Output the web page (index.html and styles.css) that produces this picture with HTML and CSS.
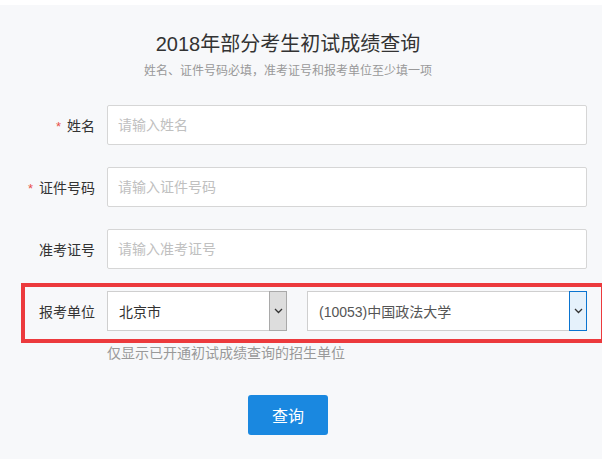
FILE: index.html
```html
<!DOCTYPE html>
<html lang="zh-CN">
<head>
<meta charset="utf-8">
<title>2018年部分考生初试成绩查询</title>
<link rel="stylesheet" href="styles.css">
</head>
<body>
<div class="page">
  <div class="head">
    <h1 class="title">2018年部分考生初试成绩查询</h1>
    <p class="subtitle">姓名、证件号码必填，准考证号和报考单位至少填一项</p>
  </div>
  <form class="form">
    <div class="rows">
      <div class="row">
        <label class="label"><span class="req">*</span>姓名</label>
        <input class="input" type="text" placeholder="请输入姓名">
      </div>
      <div class="row">
        <label class="label"><span class="req">*</span>证件号码</label>
        <input class="input" type="text" placeholder="请输入证件号码">
      </div>
      <div class="row">
        <label class="label">准考证号</label>
        <input class="input" type="text" placeholder="请输入准考证号">
      </div>
    </div>
    <div class="highlight">
      <label class="label">报考单位</label>
      <div class="select select-city">
        <span class="select-text">北京市</span>
        <span class="arrow"><svg width="9" height="6" viewBox="0 0 9 6"><path d="M1 1 L4.5 4.5 L8 1" fill="none" stroke="#333" stroke-width="1.3"/></svg></span>
      </div>
      <div class="select select-unit">
        <span class="select-text unit-text">(10053)中国政法大学</span>
        <span class="arrow arrow-focus"><svg width="9" height="6" viewBox="0 0 9 6"><path d="M1 1 L4.5 4.5 L8 1" fill="none" stroke="#333" stroke-width="1.3"/></svg></span>
      </div>
    </div>
    <p class="hint">仅显示已开通初试成绩查询的招生单位</p>
    <div class="actions">
      <button class="btn" type="button">查询</button>
    </div>
  </form>
</div>
</body>
</html>
```
FILE: styles.css
```css
html, body {
  margin: 0;
  padding: 0;
  background: #ffffff;
  overflow: hidden;
}
body {
  font-family: "Liberation Sans", "Noto Sans CJK SC", sans-serif;
  color: #333;
}
.page {
  margin-top: 5px;
  background: #f7f8fa;
  height: 454px;
  padding-top: 25px;
  box-sizing: border-box;
}
.head {
  width: 576px;
  text-align: center;
}
.title {
  margin: 0;
  font-size: 20px;
  font-weight: normal;
  line-height: 28px;
  color: #333;
}
.subtitle {
  margin: 4px 0 0;
  font-size: 12px;
  line-height: 18px;
  color: #999;
}
.form {
  margin-top: 25px;
}
.rows {
  display: flex;
  flex-direction: column;
  gap: 22px;
}
.row {
  display: flex;
  align-items: center;
  height: 40px;
}
.row .label {
  width: 95px;
}
.label {
  box-sizing: border-box;
  text-align: right;
  font-size: 14px;
  color: #333;
  flex: none;
}
.req {
  color: #e8504a;
  margin-right: 6px;
  font-size: 13px;
}
.input {
  margin-left: 12px;
  width: 480px;
  height: 40px;
  box-sizing: border-box;
  border: 1px solid #d6d6d6;
  border-radius: 2px;
  background: #fff;
  padding: 0 10px;
  font-size: 14px;
  font-family: inherit;
  color: #333;
  outline: none;
}
.input::placeholder {
  color: #c0c0c0;
}
.highlight {
  display: flex;
  align-items: center;
  margin-top: 14px;
  margin-left: 21px;
  width: 584px;
  box-sizing: border-box;
  border: 4px solid #ec3a3d;
  padding: 4px 0 8px;
}
.highlight .label {
  width: 70px;
}
.select {
  margin-left: 12px;
  height: 40px;
  box-sizing: border-box;
  border: 1px solid #cfcfcf;
  background: #fff;
  display: flex;
  align-items: stretch;
  flex: none;
}
.select-city {
  width: 180px;
}
.select-unit {
  margin-left: 20px;
  width: 280px;
}
.select-text {
  flex: 1;
  display: flex;
  align-items: center;
  padding-left: 11px;
  font-size: 14px;
  color: #333;
}
.unit-text {
  color: #555;
}
.arrow {
  width: 18px;
  box-sizing: border-box;
  background: #dddddd;
  border: 1px solid #a9a9a9;
  display: flex;
  align-items: center;
  justify-content: center;
  margin: -1px -1px -1px 0;
}
.arrow-focus {
  background: #e5f1fb;
  border: 1px solid #0a74d0;
}
.hint {
  margin: 0 0 0 107px;
  font-size: 14px;
  line-height: 20px;
  color: #999;
}
.actions {
  width: 576px;
  display: flex;
  justify-content: center;
  margin-top: 32px;
}
.btn {
  width: 80px;
  height: 40px;
  border: none;
  border-radius: 3px;
  background: #1a88e0;
  color: #fff;
  font-size: 16px;
  font-family: inherit;
  padding: 0;
}
```
